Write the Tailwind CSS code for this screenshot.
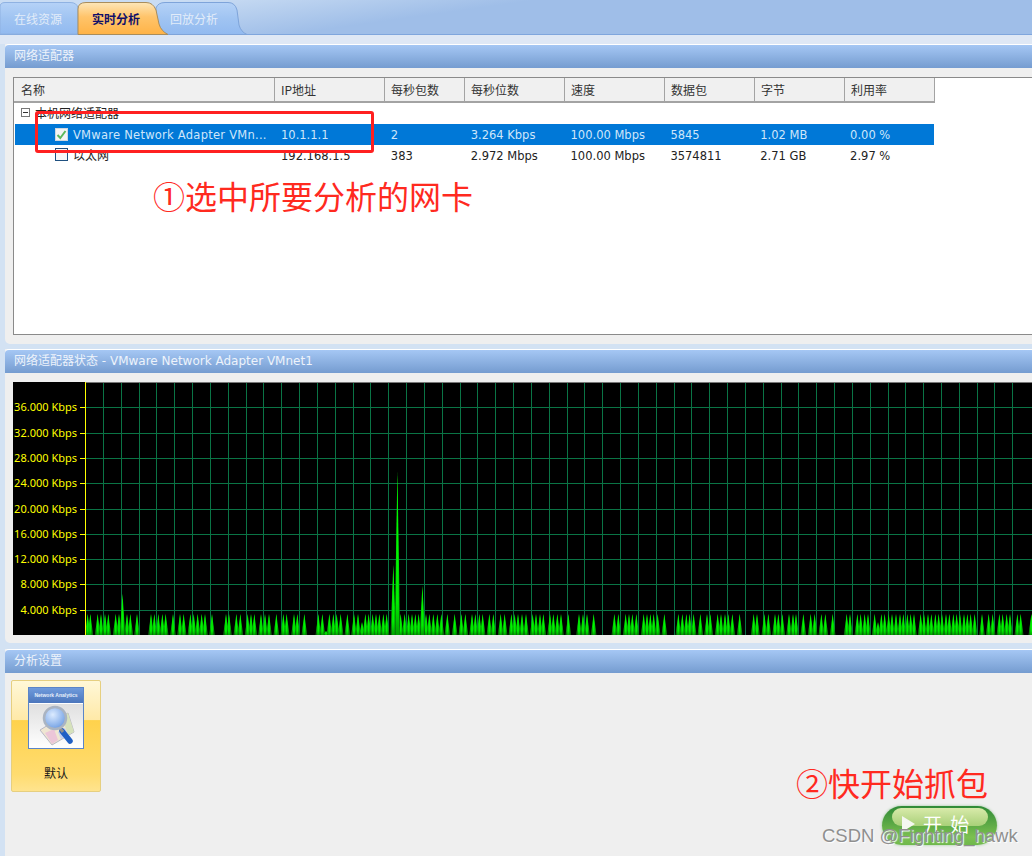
<!DOCTYPE html>
<html lang="zh">
<head>
<meta charset="utf-8">
<script src="https://cdn.jsdelivr.net/npm/@tailwindcss/browser@4"></script>
</head>
<body class="bg-[#d3e2f3]">
<div class="relative w-[1032px] h-[856px] overflow-hidden flex flex-col text-[11.5px] text-[#222] font-['DejaVu_Sans','Noto_Sans_CJK_SC',sans-serif]">

  <!-- tab bar -->
  <div class="relative h-[35px] shrink-0 flex border-b border-[#7fa6dd] bg-[linear-gradient(172deg,#c9dcf3_15%,#9fbee8_42%)]">
    <svg class="absolute left-0 top-0" width="250" height="35" viewBox="0 0 250 35">
      <defs>
        <linearGradient id="tb" x1="0" y1="0" x2="0" y2="1"><stop offset="0" stop-color="#b5d2f7"/><stop offset="0.5" stop-color="#a0c4f2"/><stop offset="1" stop-color="#92baf0"/></linearGradient>
        <linearGradient id="to" x1="0" y1="0" x2="0" y2="1"><stop offset="0" stop-color="#fde6b8"/><stop offset="0.45" stop-color="#ffc46a"/><stop offset="1" stop-color="#ffb347"/></linearGradient>
      </defs>
      <path d="M0 34V7Q0 2.500 5 2.500H70Q77 2.500 78 8V34Z" fill="url(#tb)" stroke="#8fb2e2"/>
      <path d="M156 34V8Q158 2.500 165 2.500H228Q235 2.500 237 10L239 25Q241 32 247 34.500H156Z" fill="url(#tb)" stroke="#7ea4da"/>
      <path d="M78 34.500V9Q78 2.500 86 2.500H146Q153 2.500 156 10L159 24Q161 31 168 34.500Z" fill="url(#to)" stroke="#a98d5c"/>
    </svg>
    <div class="relative w-[78px] pl-[14px] leading-[37px] text-[#e2ecf9] font-['Noto_Sans_CJK_SC',sans-serif] text-[12px]">在线资源</div>
    <div class="relative w-[92px] pl-[14px] leading-[37px] text-[#10106a] font-bold font-['Noto_Sans_CJK_SC',sans-serif] text-[12px]">实时分析</div>
    <div class="relative pl-0 leading-[37px] text-[#e2ecf9] font-['Noto_Sans_CJK_SC',sans-serif] text-[12px]">回放分析</div>
  </div>
  <div class="h-[9px] shrink-0 bg-[#dfe8f5]"></div>

  <!-- adapters panel -->
  <section class="ml-[5px] h-[300px] shrink-0 flex flex-col bg-[#efefef] rounded-bl-[5px]">
    <h2 class="h-[24px] shrink-0 pl-[9px] leading-[22px] border-t border-white rounded-tl-[4px] bg-[linear-gradient(#a5c7f4,#759cd0)] text-[#edf3fb] text-[12px] font-normal">网络适配器</h2>
    <div class="mt-[9px] ml-[8px] h-[258px] bg-white border-t border-l border-b border-[#8a8a8a]">
      <div class="flex h-[25px] w-[922px] text-[#333] font-['Noto_Sans_CJK_SC',sans-serif] text-[12px] leading-[24px]">
        <div class="w-[261px] pl-[7px] bg-[#f0f0f0] border-r border-b-2 border-[#a3a3a3]">名称</div>
        <div class="w-[110px] pl-[6px] bg-[#f0f0f0] border-r border-b-2 border-[#a3a3a3]">IP地址</div>
        <div class="w-[80px] pl-[6px] bg-[#f0f0f0] border-r border-b-2 border-[#a3a3a3]">每秒包数</div>
        <div class="w-[100px] pl-[6px] bg-[#f0f0f0] border-r border-b-2 border-[#a3a3a3]">每秒位数</div>
        <div class="w-[100px] pl-[6px] bg-[#f0f0f0] border-r border-b-2 border-[#a3a3a3]">速度</div>
        <div class="w-[90px] pl-[6px] bg-[#f0f0f0] border-r border-b-2 border-[#a3a3a3]">数据包</div>
        <div class="w-[90px] pl-[6px] bg-[#f0f0f0] border-r border-b-2 border-[#a3a3a3]">字节</div>
        <div class="w-[90px] pl-[6px] bg-[#f0f0f0] border-r border-b-2 border-[#a3a3a3]">利用率</div>
      </div>
      <div class="flex items-center h-[21px] pl-[7px] pb-[1px] text-[12px] font-['Noto_Sans_CJK_SC',sans-serif] text-[#222]">
        <span class="relative w-[9px] h-[9px] border border-[#777] bg-white mr-[5px] -translate-y-px"><span class="absolute left-[1px] top-[3px] w-[5px] h-px bg-[#333]"></span></span>本机网络适配器
      </div>
      <div class="flex items-center h-[21px] w-[919px] ml-px pt-[2px] bg-[#0078d7] text-[#cfe6fa]">
        <div class="w-[260px] flex items-center pl-[40px] shrink-0">
          <span class="w-[13px] h-[13px] mr-[5px] -translate-y-px border border-[#cfd8e0] bg-[#f4f4f4] flex items-center justify-center">
            <svg width="11" height="11" viewBox="0 0 11 11"><path d="M1.500 6L4.300 9L9.500 2" fill="none" stroke="#5cb85c" stroke-width="2"/></svg>
          </span>
          <span class="whitespace-nowrap tracking-[0.25px]">VMware Network Adapter VMn...</span>
        </div>
        <div class="w-[110px] pl-[6px]">10.1.1.1</div>
        <div class="w-[80px] pl-[6px]">2</div>
        <div class="w-[100px] pl-[6px]">3.264 Kbps</div>
        <div class="w-[100px] pl-[6px]">100.00 Mbps</div>
        <div class="w-[90px] pl-[6px]">5845</div>
        <div class="w-[90px] pl-[6px]">1.02 MB</div>
        <div class="w-[90px] pl-[6px]">0.00 %</div>
      </div>
      <div class="flex items-center h-[21px] w-[919px] ml-px pt-[2px]">
        <div class="w-[260px] flex items-center pl-[40px] shrink-0 -translate-y-[2px]">
          <span class="w-[13px] h-[13px] mr-[5px] border border-[#1f5080] bg-[#f7f7f7]"></span>
          <span class="font-['Noto_Sans_CJK_SC',sans-serif] text-[12px]">以太网</span>
        </div>
        <div class="w-[110px] pl-[6px]">192.168.1.5</div>
        <div class="w-[80px] pl-[6px]">383</div>
        <div class="w-[100px] pl-[6px]">2.972 Mbps</div>
        <div class="w-[100px] pl-[6px]">100.00 Mbps</div>
        <div class="w-[90px] pl-[6px]">3574811</div>
        <div class="w-[90px] pl-[6px]">2.71 GB</div>
        <div class="w-[90px] pl-[6px]">2.97 %</div>
      </div>
    </div>
  </section>
  <div class="h-[5px] shrink-0"></div>

  <!-- status panel -->
  <section class="ml-[5px] h-[294px] shrink-0 flex flex-col bg-[#efefef] rounded-bl-[5px]">
    <h2 class="h-[24px] shrink-0 pl-[9px] leading-[22px] border-t border-white rounded-tl-[4px] bg-[linear-gradient(#a5c7f4,#759cd0)] text-[#edf3fb] text-[12px] font-normal">网络适配器状态 - VMware Network Adapter VMnet1</h2>
    <div class="mt-[9px] ml-[8px] h-[253px] bg-black">
      <svg id="chart" width="1019" height="253" viewBox="13 382 1019 253" class="block font-['Noto_Sans',sans-serif]">
        <defs>
          <linearGradient id="sp" x1="0" y1="0" x2="0" y2="1"><stop offset="0" stop-color="#00f000"/><stop offset="0.6" stop-color="#00c400"/><stop offset="1" stop-color="#0a5f0a"/></linearGradient>
          <linearGradient id="sc" x1="0" y1="0" x2="0" y2="1"><stop offset="0" stop-color="#00ff00"/><stop offset="0.8" stop-color="#00f000"/><stop offset="1" stop-color="#00a000"/></linearGradient>
        </defs>
        <rect x="85" y="382" width="947" height="1" fill="#777"/>
        <g id="grid"></g>
        <g id="spikes"></g>
        <rect x="85" y="382" width="1" height="253" fill="#ffff00"/>
        <g id="ticks" fill="#ffff00" font-size="11" text-anchor="end">
          <rect x="80" y="407" width="5" height="1"/><text x="77" y="411">36.000 Kbps</text>
          <rect x="80" y="433" width="5" height="1"/><text x="77" y="437">32.000 Kbps</text>
          <rect x="80" y="458" width="5" height="1"/><text x="77" y="462">28.000 Kbps</text>
          <rect x="80" y="483" width="5" height="1"/><text x="77" y="487">24.000 Kbps</text>
          <rect x="80" y="509" width="5" height="1"/><text x="77" y="513">20.000 Kbps</text>
          <rect x="80" y="534" width="5" height="1"/><text x="77" y="538">16.000 Kbps</text>
          <rect x="80" y="559" width="5" height="1"/><text x="77" y="563">12.000 Kbps</text>
          <rect x="80" y="584" width="5" height="1"/><text x="77" y="588">8.000 Kbps</text>
          <rect x="80" y="610" width="5" height="1"/><text x="77" y="614">4.000 Kbps</text>
        </g>
      </svg>
    </div>
  </section>
  <div class="h-[6px] shrink-0"></div>

  <!-- analysis settings -->
  <section class="ml-[5px] flex-1 flex flex-col bg-[#efefef]">
    <h2 class="h-[24px] shrink-0 pl-[9px] leading-[22px] border-t border-white rounded-tl-[4px] bg-[linear-gradient(#a5c7f4,#759cd0)] text-[#edf3fb] text-[12px] font-normal">分析设置</h2>
    <div class="mt-[7px] ml-[6px] w-[90px] h-[112px] flex flex-col items-center rounded-[2px] border border-[#e6cf80] bg-[linear-gradient(#fff8d8,#ffe9a8_35%,#ffd24c_36%,#ffdc70_85%,#ffe48e)]">
      <svg class="mt-[5px]" width="58" height="64" viewBox="0 0 58 64">
        <defs>
          <linearGradient id="ih" x1="0" y1="0" x2="0" y2="1"><stop offset="0" stop-color="#6f9bdc"/><stop offset="1" stop-color="#4c76bc"/></linearGradient>
          <linearGradient id="ib" x1="0" y1="0" x2="0" y2="1"><stop offset="0" stop-color="#d4d4d4"/><stop offset="1" stop-color="#ffffff"/></linearGradient>
          <radialGradient id="ig" cx="0.4" cy="0.35" r="0.75"><stop offset="0" stop-color="#dcebff"/><stop offset="0.7" stop-color="#88b0ea"/><stop offset="1" stop-color="#5d90e0"/></radialGradient>
        </defs>
        <rect x="1.500" y="1.500" width="55" height="61" fill="url(#ib)" stroke="#5b85c8"/>
        <rect x="2" y="2" width="54" height="15" fill="url(#ih)"/>
        <rect x="2" y="17" width="54" height="1" fill="#ffffff"/>
        <text x="29" y="11" font-size="5" fill="#e8f0fb" text-anchor="middle" font-weight="700" font-family="Liberation Sans">Network Analytics</text>
        <path d="M13 44L41 27L47 46L25 59Z" fill="#efe6d2" stroke="#a9a9bc" stroke-width="0.800"/>
        <path d="M35 31L41 27L47 46L41 49Z" fill="#d6e2bc"/>
        <path d="M18 47L27 43L31 54L25 58Z" fill="#ecc6d8"/>
        <path d="M31 46L38 42L41 49L34 53Z" fill="#c4d0f0"/>
        <path d="M35 45L43 55" stroke="#1f5fc4" stroke-width="5.500" stroke-linecap="round"/>
        <path d="M32 41L36 46" stroke="#8e8e8e" stroke-width="3"/>
        <circle cx="28" cy="32" r="11" fill="url(#ig)" stroke="#aab4c2" stroke-width="2.500"/>
      </svg>
      <div class="mt-[14px] font-['Noto_Sans_CJK_SC',sans-serif] text-[12px] text-[#1a1a1a]">默认</div>
    </div>
  </section>

  <!-- annotations lying over the screenshot -->
  <div class="absolute left-[35px] top-[111px] w-[339px] h-[42px] rounded-[3px] border-[3px] border-[#ff2020]"></div>
  <div class="absolute left-[153px] top-[172px] text-[32px] leading-[46px] whitespace-nowrap text-[#ff2a1f] font-['Noto_Sans_CJK_SC',sans-serif]">①选中所要分析的网卡</div>
  <div class="absolute left-[796px] top-[759px] text-[32px] leading-[46px] whitespace-nowrap text-[#ff2a1f] font-['Noto_Sans_CJK_SC',sans-serif]">②快开始抓包</div>

  <button class="absolute left-[882px] top-[806px] w-[115px] h-[39px] rounded-full bg-[linear-gradient(#2f8a36,#5aa845_45%,#7cc050_80%,#6fb84c)] shadow-[0_0_3px_#9ac79a]">
    <span class="absolute left-[10px] top-[2px] w-[96px] h-[18px] rounded-full bg-[linear-gradient(#d8eaaa,#a8d078)]"></span>
    <svg class="absolute left-[20px] top-[10px]" width="13" height="16" viewBox="0 0 13 16"><path d="M0 0L13 8L0 16Z" fill="#f4f7f0"/></svg>
    <span class="absolute left-[41px] top-[4px] text-[19px] leading-[28px] whitespace-nowrap tracking-[2px] text-white font-['Noto_Sans_CJK_SC',sans-serif]">开 始</span>
  </button>
  <div class="absolute left-[822px] top-[825px] text-[18.5px] leading-[22px] whitespace-nowrap text-[#8f8f8f] [text-shadow:1px_1px_1px_#fff] font-['Liberation_Sans',sans-serif]">CSDN @Fighting_hawk</div>
</div>

<script>
(function(){
  var NS='http://www.w3.org/2000/svg';
  function el(n,a,p){var e=document.createElementNS(NS,n);for(var k in a)e.setAttribute(k,a[k]);p.appendChild(e);return e;}
  var grid=document.getElementById('grid');
  [407,433,458,483,509,534,559,584,610].forEach(function(y){el('rect',{x:86,y:y,width:946,height:1,fill:'#0a7445'},grid);});
  for(var i=0;i<52;i++){el('rect',{x:Math.round(103+i*17.83),y:383,width:1,height:252,fill:'#0a7445'},grid);}
  var z1=[8,16,38,48,60,70,92,102,126,136,156,198,208,220,232,242,264,285,296,316,326,338,350,360,381,423,432,454,466,488,498,508,528,540,552,574,595,605,627,637,658,700,712];
  var z2=[28,40,50,62,82,102,114,136,146,158,168,178,190,200,242,254,266,276,286,296,318,328,340,352,364,382,404,424,436,456,466,478,488,508,520,542,554,574,584,594,606,618,638,648,660,670,690,700,712];
  var z3=[18,40,72,84,96,116,178,190,212,222,232,244,266,276,286,296,308,328,370,382,394,404,416,436,456,466,488,498,510,520,532,554,596,606,628,640,660,670,682,702,714];
  var z4=[12,34,56,68,88,100,122,164,174,196,206,218,228,248,268,278,290,300,312,324,334,346,356,366,386,396,408,418,430,440,450,462,472,484,494,504,516,526,536,548,570,590,602,622,632,644,654,676,686,718];
  var pts=[];
  z1.forEach(function(z){pts.push([85+z/3,614,1.200]);});
  z2.forEach(function(z){pts.push([320+z/3,614,1.200]);});
  z3.forEach(function(z){pts.push([555+z/3,614,1.200]);});
  z4.forEach(function(z){pts.push([792+z/3,614,1.200]);});
  pts.push([122.5,594,1.500],[393.3,565,1.500],[397.4,472,1.800],[422.4,586,1.500],[362,622,1],[326,631,1],[878,622,1]);
  var s=document.getElementById('spikes');
  pts.forEach(function(p){
    var x=p[0],y=p[1];
    el('path',{d:'M'+(x-2.8)+' 635L'+x+' '+y+'L'+(x+2.8)+' 635Z',fill:'url(#sp)'},s);
  });
  pts.forEach(function(p){
    var x=p[0],y=p[1],w=p[2];
    el('path',{d:'M'+(x-w)+' 635L'+x+' '+y+'L'+(x+w)+' 635Z',fill:'url(#sc)'},s);
  });
})();
</script>
</body>
</html>
